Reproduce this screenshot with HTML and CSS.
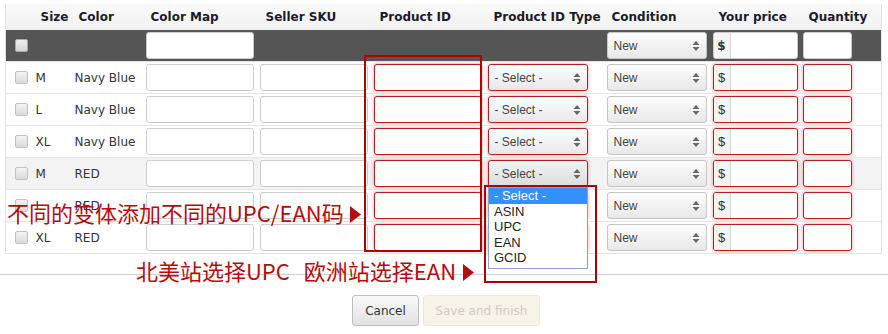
FILE: index.html
```html
<!DOCTYPE html>
<html lang="zh-CN">
<head>
  <meta charset="UTF-8">
  <meta name="viewport" content="width=device-width, initial-scale=1.0">
  <link rel="stylesheet" href="styles.css">
  <title>Variations</title>
</head>
<body>

<div class="page">
  <table class="variations">
    <colgroup>
      <col class="c-check"><col class="c-size"><col class="c-color"><col class="c-map"><col class="c-sku">
      <col class="c-pid"><col class="c-type"><col class="c-cond"><col class="c-price"><col class="c-qty">
    </colgroup>
    <thead>
      <tr class="head">
        <th></th><th>Size</th><th>Color</th><th>Color Map</th><th>Seller SKU</th>
        <th>Product ID</th><th>Product ID Type</th><th>Condition</th><th>Your price</th><th>Quantity</th>
      </tr>
      <tr class="bulk">
        <td><span class="check"></span></td>
        <td></td><td></td>
        <td><input class="field"></td>
        <td></td><td></td><td></td>
        <td><div class="select"><span>New</span><svg class="arrows" width="8" height="12" viewBox="0 0 8 12"><path d="M4 1 L7.5 5 H0.5 Z M4 11 L7.5 7 H0.5 Z"/></svg></div></td>
        <td><div class="price"><span class="addon">$</span><input class="amount"></div></td>
        <td><input class="field qty"></td>
      </tr>
    </thead>
    <tbody>
      <tr>
        <td><span class="check"></span></td><td>M</td><td>Navy Blue</td>
        <td><input class="field"></td><td><input class="field"></td><td><input class="field error"></td>
        <td><div class="select error"><span>- Select -</span><svg class="arrows" width="8" height="12" viewBox="0 0 8 12"><path d="M4 1 L7.5 5 H0.5 Z M4 11 L7.5 7 H0.5 Z"/></svg></div></td>
        <td><div class="select"><span>New</span><svg class="arrows" width="8" height="12" viewBox="0 0 8 12"><path d="M4 1 L7.5 5 H0.5 Z M4 11 L7.5 7 H0.5 Z"/></svg></div></td>
        <td><div class="price error"><span class="addon">$</span><input class="amount"></div></td>
        <td><input class="field qty error"></td>
      </tr>
      <tr>
        <td><span class="check"></span></td><td>L</td><td>Navy Blue</td>
        <td><input class="field"></td><td><input class="field"></td><td><input class="field error"></td>
        <td><div class="select error"><span>- Select -</span><svg class="arrows" width="8" height="12" viewBox="0 0 8 12"><path d="M4 1 L7.5 5 H0.5 Z M4 11 L7.5 7 H0.5 Z"/></svg></div></td>
        <td><div class="select"><span>New</span><svg class="arrows" width="8" height="12" viewBox="0 0 8 12"><path d="M4 1 L7.5 5 H0.5 Z M4 11 L7.5 7 H0.5 Z"/></svg></div></td>
        <td><div class="price error"><span class="addon">$</span><input class="amount"></div></td>
        <td><input class="field qty error"></td>
      </tr>
      <tr>
        <td><span class="check"></span></td><td>XL</td><td>Navy Blue</td>
        <td><input class="field"></td><td><input class="field"></td><td><input class="field error"></td>
        <td><div class="select error"><span>- Select -</span><svg class="arrows" width="8" height="12" viewBox="0 0 8 12"><path d="M4 1 L7.5 5 H0.5 Z M4 11 L7.5 7 H0.5 Z"/></svg></div></td>
        <td><div class="select"><span>New</span><svg class="arrows" width="8" height="12" viewBox="0 0 8 12"><path d="M4 1 L7.5 5 H0.5 Z M4 11 L7.5 7 H0.5 Z"/></svg></div></td>
        <td><div class="price error"><span class="addon">$</span><input class="amount"></div></td>
        <td><input class="field qty error"></td>
      </tr>
      <tr class="hover">
        <td><span class="check"></span></td><td>M</td><td>RED</td>
        <td><input class="field"></td><td><input class="field"></td><td><input class="field error"></td>
        <td><div class="select error open"><span>- Select -</span><svg class="arrows" width="8" height="12" viewBox="0 0 8 12"><path d="M4 1 L7.5 5 H0.5 Z M4 11 L7.5 7 H0.5 Z"/></svg></div></td>
        <td><div class="select"><span>New</span><svg class="arrows" width="8" height="12" viewBox="0 0 8 12"><path d="M4 1 L7.5 5 H0.5 Z M4 11 L7.5 7 H0.5 Z"/></svg></div></td>
        <td><div class="price error"><span class="addon">$</span><input class="amount"></div></td>
        <td><input class="field qty error"></td>
      </tr>
      <tr>
        <td><span class="check"></span></td><td>L</td><td>RED</td>
        <td><input class="field"></td><td><input class="field"></td><td><input class="field error"></td>
        <td><div class="select error"></div></td>
        <td><div class="select"><span>New</span><svg class="arrows" width="8" height="12" viewBox="0 0 8 12"><path d="M4 1 L7.5 5 H0.5 Z M4 11 L7.5 7 H0.5 Z"/></svg></div></td>
        <td><div class="price error"><span class="addon">$</span><input class="amount"></div></td>
        <td><input class="field qty error"></td>
      </tr>
      <tr>
        <td><span class="check"></span></td><td>XL</td><td>RED</td>
        <td><input class="field"></td><td><input class="field"></td><td><input class="field error"></td>
        <td><div class="select error"></div></td>
        <td><div class="select"><span>New</span><svg class="arrows" width="8" height="12" viewBox="0 0 8 12"><path d="M4 1 L7.5 5 H0.5 Z M4 11 L7.5 7 H0.5 Z"/></svg></div></td>
        <td><div class="price error"><span class="addon">$</span><input class="amount"></div></td>
        <td><input class="field qty error"></td>
      </tr>
    </tbody>
  </table>

  <div class="footer">
    <div class="actions">
      <button class="btn">Cancel</button>
      <button class="btn disabled" disabled>Save and finish</button>
    </div>
  </div>

  <!-- dropdown opened on row 4 -->
  <ul class="type-list">
    <li class="active">- Select -</li>
    <li>ASIN</li>
    <li>UPC</li>
    <li>EAN</li>
    <li>GCID</li>
  </ul>

  <!-- annotations -->
  <div class="mark mark-pid"></div>
  <div class="mark mark-type"></div>
  <p class="note note-variants">不同的变体添加不同的UPC/EAN码<svg class="tri" width="11" height="17" viewBox="0 0 11 17"><path d="M0 0 L11 8.5 L0 17 Z"/></svg></p>
  <p class="note note-market">北美站选择UPC<span class="gap"></span>欧洲站选择EAN<svg class="tri" width="11" height="17" viewBox="0 0 11 17"><path d="M0 0 L11 8.5 L0 17 Z"/></svg></p>
</div>

</body>
</html>
```

FILE: styles.css
```css
body {
  margin: 0;
  background: #fff;
  font-family: "DejaVu Sans", Verdana, sans-serif;
  font-size: 12px;
  color: #333;
}
.page {
  position: relative;
  width: 888px;
  height: 334px;
  padding-top: 4px;
  box-sizing: border-box;
}
.variations {
  margin-left: 5px;
  width: 876px;
  table-layout: fixed;
  border-collapse: collapse;
  border: 1px solid #e2e2e2;
  border-top: 0;
}
.c-check { width: 27px; }
.c-size { width: 38px; }
.c-color { width: 72px; }
.c-map { width: 115px; }
.c-sku { width: 114px; }
.c-pid { width: 114px; }
.c-type { width: 118px; }
.c-cond { width: 107px; }
.c-price { width: 90px; }
.c-qty { width: 81px; }

.head th {
  height: 26px;
  padding: 0 0 0 8px;
  text-align: left;
  font-weight: bold;
  color: #1b1b2b;
  white-space: nowrap;
  background: linear-gradient(#fbfbfb, #f0f0f0);
}
.bulk td {
  height: 31px;
  background: #555;
}
.variations td {
  padding: 0 2px;
  vertical-align: middle;
  white-space: nowrap;
}
.variations td:first-child {
  padding-left: 9px;
}
.variations td:nth-child(2),
.variations td:nth-child(4),
.variations td:nth-child(8) {
  padding-left: 3px;
}
.variations td:nth-child(3) {
  padding-left: 4px;
}
tbody tr {
  height: 32px;
  border-top: 1px solid #e4e4e4;
}
tbody tr.hover {
  background: #f3f3f3;
}

.check {
  display: block;
  width: 11px;
  height: 11px;
  border: 1px solid #c2c2c2;
  border-radius: 2px;
  background: linear-gradient(#f4f4f4, #d9d9d9);
}
.bulk .check {
  border-color: #aaa;
  background: linear-gradient(#eee, #d4d4d4);
}

.field {
  display: block;
  box-sizing: border-box;
  width: 108px;
  height: 27px;
  margin: 0;
  padding: 0 5px;
  border: 1px solid #ccc;
  border-radius: 3px;
  background: #fff;
}
.field.qty {
  width: 49px;
}
.error {
  border-color: #b81c1c;
  box-shadow: 0 0 3px 1px rgba(210, 40, 40, 0.28);
}

.select {
  display: flex;
  align-items: center;
  justify-content: space-between;
  box-sizing: border-box;
  width: 100px;
  height: 27px;
  padding: 0 6px;
  border: 1px solid #c6c6c6;
  border-radius: 3px;
  background: linear-gradient(#fdfdfd, #e8e8e8);
  font-family: "Liberation Sans", Arial, sans-serif;
  font-size: 12px;
  color: #444;
}
.select.error {
  border-color: #b81c1c;
}
.select.open {
  background: linear-gradient(#f3f3f3, #dcdcdc);
}
.arrows {
  fill: #666;
}

.price {
  display: flex;
  box-sizing: border-box;
  width: 85px;
  height: 27px;
  border: 1px solid #ccc;
  border-radius: 3px;
  background: #fff;
  overflow: hidden;
}
.price.error {
  border-color: #b81c1c;
}
.addon {
  width: 16px;
  flex: none;
  display: flex;
  align-items: center;
  justify-content: center;
  background: #f4f4f4;
  border-right: 1px solid #d6d6d6;
  color: #333;
  font-family: "Liberation Sans", Arial, sans-serif;
  font-size: 13px;
}
.bulk .addon {
  font-weight: bold;
  font-family: "DejaVu Sans", Verdana, sans-serif;
  font-size: 12px;
}
.amount {
  flex: 1;
  min-width: 0;
  border: 0;
  margin: 0;
  padding: 0 4px;
  background: transparent;
}

.footer {
  margin-top: 20px;
  border-top: 1px solid #cfcfcf;
}
.actions {
  display: flex;
  justify-content: center;
  gap: 4px;
  padding: 20px 0 0 4px;
}
.btn {
  height: 31px;
  padding: 0 12px;
  font-family: "DejaVu Sans", Verdana, sans-serif;
  font-size: 12px;
  color: #333;
  border: 1px solid #bdbdbd;
  border-radius: 3px;
  background: linear-gradient(#f9f9f9, #e2e2e2);
}
.btn.disabled {
  width: 117px;
  padding: 0;
  color: #cfcac0;
  border-color: #efe9dc;
  background: #f8f3e8;
}

.type-list {
  position: absolute;
  left: 488px;
  top: 187px;
  width: 100px;
  box-sizing: border-box;
  margin: 0;
  padding: 0 0 2px;
  list-style: none;
  background: #fff;
  border: 1px solid #8aa2c6;
  font-family: "Liberation Sans", Arial, sans-serif;
  font-size: 13px;
  color: #222;
}
.type-list li {
  height: 15.6px;
  line-height: 15.6px;
  padding-left: 5px;
}
.type-list li.active {
  background: #3390ff;
  color: #fff;
}

.mark {
  position: absolute;
  border: 2px solid #b00000;
}
.mark-pid {
  left: 364px;
  top: 55px;
  width: 114px;
  height: 193px;
}
.mark-type {
  left: 484px;
  top: 185px;
  width: 109px;
  height: 94px;
}

.note {
  position: absolute;
  margin: 0;
  font-family: "Noto Sans CJK SC", "Noto Sans", sans-serif;
  font-size: 22px;
  line-height: 26px;
  color: #b40d0d;
  white-space: nowrap;
}
.note-variants {
  left: 7px;
  top: 199px;
}
.note-market {
  left: 136px;
  top: 257px;
}
.gap {
  display: inline-block;
  width: 14px;
}
.tri {
  fill: #b40d0d;
  margin-left: 6px;
  vertical-align: -1px;
}
.note-market .tri {
  margin-left: 7px;
}
```
